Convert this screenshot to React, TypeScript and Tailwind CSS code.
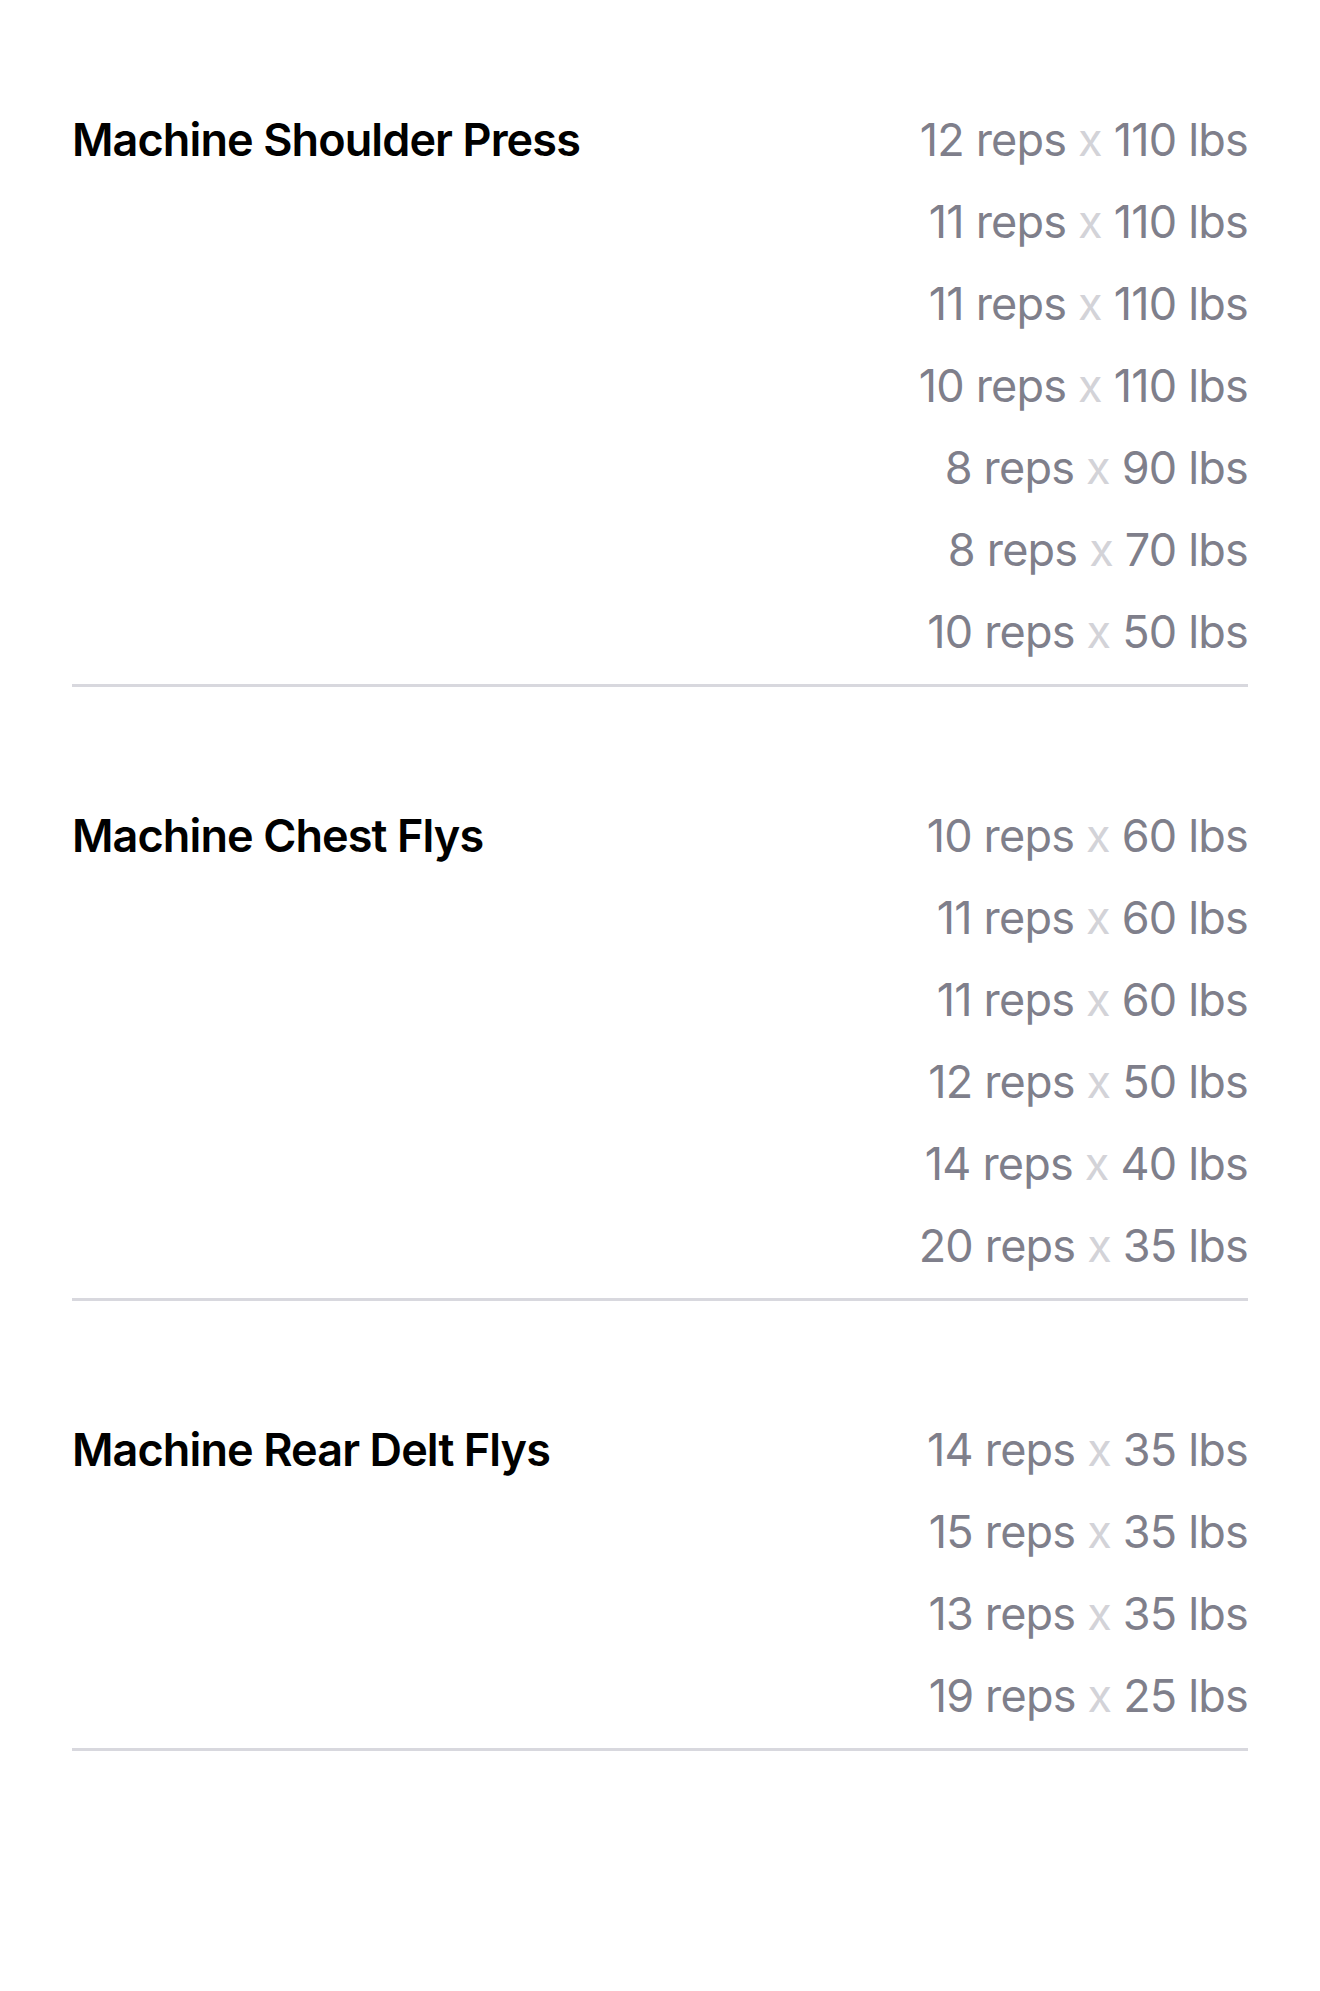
import React from "react";

type Set = [number, number];
const sections: { name: string; sets: Set[] }[] = [
  {
    name: "Machine Shoulder Press",
    sets: [
      [12, 110],
      [11, 110],
      [11, 110],
      [10, 110],
      [8, 90],
      [8, 70],
      [10, 50],
    ],
  },
  {
    name: "Machine Chest Flys",
    sets: [
      [10, 60],
      [11, 60],
      [11, 60],
      [12, 50],
      [14, 40],
      [20, 35],
    ],
  },
  {
    name: "Machine Rear Delt Flys",
    sets: [
      [14, 35],
      [15, 35],
      [13, 35],
      [19, 25],
    ],
  },
];

export default function App() {
  return (
    <div
      className="w-[1320px] min-h-[1991px] bg-white px-[72px] pt-[99px]"
      style={{ fontFamily: "Inter, 'Noto Sans', sans-serif" }}
    >
      {sections.map((s, i) => (
        <div key={s.name} className={i > 0 ? "mt-[108px]" : ""}>
          <div className="flex justify-between pb-[11px]">
            <div className="text-[45px] leading-[82px] font-semibold text-black tracking-[-0.9px]">
              {s.name}
            </div>
            <div className="flex flex-col items-end">
              {s.sets.map(([r, w], j) => (
                <div
                  key={j}
                  className="text-[45px] leading-[82px] text-[#7f7f8b] tracking-[-0.8px]"
                >
                  {r} reps <span className="text-[#d3d3d8]">x</span> {w} lbs
                </div>
              ))}
            </div>
          </div>
          <div className="h-[3px] bg-[#d8d8de]" />
        </div>
      ))}
    </div>
  );
}
